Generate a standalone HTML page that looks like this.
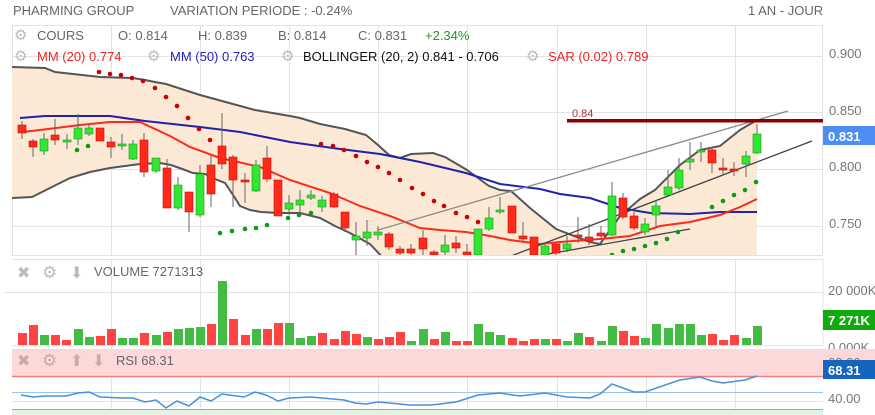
<!DOCTYPE html>
<html><head><meta charset="utf-8"><style>
body{margin:0;width:875px;height:415px;overflow:hidden;background:#fff;font-family:"Liberation Sans",sans-serif}
svg{position:absolute;left:0;top:0}
</style></head><body>
<svg width="875" height="415" viewBox="0 0 875 415" font-family="Liberation Sans, sans-serif">
<defs><clipPath id="mc"><rect x="12" y="25" width="811" height="230"/></clipPath>
<clipPath id="rc"><rect x="12" y="347" width="811" height="68"/></clipPath></defs>
<!-- header -->
<text x="13" y="15" font-size="13" fill="#666">PHARMING GROUP</text>
<text x="170" y="15" font-size="13" fill="#666">VARIATION PERIODE : -0.24%</text>
<text x="748" y="15" font-size="13" fill="#666">1 AN - JOUR</text>
<!-- grid -->
<g stroke="#e3e3e3" stroke-width="1" fill="none">
<rect x="12.5" y="25.5" width="810" height="230"/>
<path d="M111.5 25V255M200.5 25V255M289.5 25V255M378.5 25V255M467.5 25V255M557.5 25V255M646.5 25V255M735.5 25V255"/>
<path d="M12 56.5H823M12 112.5H823M12 169.5H823M12 226.5H823"/>
<path d="M111.5 259V345M200.5 259V345M289.5 259V345M378.5 259V345M467.5 259V345M557.5 259V345M646.5 259V345M735.5 259V345"/>
<path d="M12 259.5H823M5 292.5H823M12 345.5H823M823 259V345"/>
<path d="M111.5 347V415M200.5 347V415M289.5 347V415M378.5 347V415M467.5 347V415M557.5 347V415M646.5 347V415M735.5 347V415"/>
</g>
<g clip-path="url(#mc)">
<!-- bollinger fill -->
<path fill="#fbe9d6" d="M12 67L45 68L55 72L100 77L133 78L145 80L155 82L166 84L200 95L233 104L255 110L290 116L300 118L320 124L345 129L366 135L378 145L389 155L400 158L411 154L433 153L445 157L467 170L489 186L500 190L511 191L530 208L556 229L590 242L600 244L620 216L640 199L655 190L680 165L700 150L720 146L740 130L757 120L757 260L385 260L370 244L350 233L335 226L320 218L300 213L280 213L261 212L250 210L240 206L235 198L225 183L215 179L205 174L193 173L185 170L171 165L160 163L140 164L125 166L110 168L90 172L70 178L50 188L32 197L12 198Z"/>
<g stroke="#555" stroke-width="2" fill="none">
<path d="M12 67L45 68L55 72L100 77L133 78L145 80L155 82L166 84L200 95L233 104L255 110L290 116L300 118L320 124L345 129L366 135L378 145L389 155L400 158L411 154L433 153L445 157L467 170L489 186L500 190L511 191L530 208L556 229L590 242L600 244L620 216L640 199L655 190L680 165L700 150L720 146L740 130L757 120"/>
<path d="M12 198L32 197L50 188L70 178L90 172L110 168L125 166L140 164L160 163L171 165L185 170L193 173L205 174L215 179L225 183L235 198L240 206L250 210L261 212L280 213L300 213L320 218L335 226L350 233L370 244L385 260"/>
</g>
<path d="M20 118L45 116L110 116L145 121L200 127L240 132L290 142L340 149L380 154L420 162L466 173L500 184L540 189L560 194L590 198L620 208L650 213L690 214L720 212L757 212" stroke="#2222aa" stroke-width="2" fill="none"/>
<path d="M22 132L40 130L80 125L110 122L140 122L170 136L190 147L220 158L260 167L290 180L330 193L360 206L390 216L420 228L440 230L466 232L490 236L510 240L540 244L560 242L600 239L630 236L660 226L690 222L720 215L740 207L757 199" stroke="#ff2a1a" stroke-width="2" fill="none"/>
<!-- trendlines -->
<path d="M378 230L788 111" stroke="#888" stroke-width="1.3"/>
<path d="M511 256L812 141" stroke="#444" stroke-width="1.3"/>
<path d="M548 254L690 229" stroke="#444" stroke-width="1.3"/>
<!-- wicks -->
<g stroke="#666" stroke-width="1">
<path d="M22 121V139M33 139V157M44 133V155M55 119V145M67 134V149M78 114V145M89 124V136M100 128V141M111 137V158M122 134V150M133 140V160M144 133V177M156 158V173M167 159V208M178 177V210M189 192V232M200 165V217M211 155V207M222 113V169M233 155V207M245 173V203M256 160V192M267 146V182M278 180V216M289 195V215M300 190V212M311 190V200M322 196V212M334 192V208M345 212V232M356 222V255M367 220V246M378 226V240M389 232V250M400 246V255M411 244V255M423 230V255M434 250V255M445 235V255M456 236V253M467 244V255M478 229V255M489 207V231M500 197V214M512 206V233M523 222V242M534 237V255M545 242V255M556 244V255M567 236V252M578 217V243M589 224V245M601 226V240M612 182V236M623 193V219M634 212V230M645 218V235M656 200V228M668 170V197M679 158V190M690 142V170M701 142V162M712 147V173M723 158V175M734 162V176M746 151V177M757 124V154"/>
</g>
<!-- bodies -->
<g fill="#ff2a1a" stroke="#c01010" stroke-width="0.6">
<rect x="18" y="125" width="8" height="8"/><rect x="29" y="141" width="8" height="6"/><rect x="51" y="135" width="8" height="5"/><rect x="96" y="128" width="8" height="13"/><rect x="107" y="142" width="8" height="5"/><rect x="140" y="140" width="8" height="32"/><rect x="163" y="168" width="8" height="40"/><rect x="185" y="192" width="8" height="20"/><rect x="207" y="165" width="8" height="29"/><rect x="218" y="146" width="8" height="18"/><rect x="229" y="157" width="8" height="23"/><rect x="241" y="180" width="8" height="2"/><rect x="263" y="158" width="8" height="21"/><rect x="274" y="180" width="8" height="36"/><rect x="330" y="194" width="8" height="13"/><rect x="341" y="212" width="8" height="16"/><rect x="385" y="234" width="8" height="13"/><rect x="396" y="249" width="8" height="4"/><rect x="407" y="249" width="8" height="4"/><rect x="419" y="238" width="8" height="11"/><rect x="430" y="252" width="8" height="3"/><rect x="452" y="243" width="8" height="5"/><rect x="463" y="252" width="8" height="3"/><rect x="508" y="206" width="8" height="27"/><rect x="519" y="236" width="8" height="3"/><rect x="530" y="237" width="8" height="18"/><rect x="552" y="244" width="8" height="9"/><rect x="574" y="235" width="8" height="2"/><rect x="585" y="237" width="8" height="4"/><rect x="597" y="233" width="8" height="3"/><rect x="619" y="198" width="8" height="19"/><rect x="630" y="216" width="8" height="12"/><rect x="708" y="150" width="8" height="13"/><rect x="719" y="168" width="8" height="2"/><rect x="730" y="169" width="8" height="2"/>
</g>
<g fill="#33e633" stroke="#1a9a1a" stroke-width="0.6">
<rect x="40" y="139" width="8" height="12"/><rect x="63" y="140" width="8" height="2"/><rect x="74" y="128" width="8" height="11"/><rect x="85" y="128" width="8" height="6"/><rect x="118" y="144" width="8" height="2"/><rect x="129" y="144" width="8" height="15"/><rect x="152" y="158" width="8" height="13"/><rect x="174" y="185" width="8" height="23"/><rect x="196" y="174" width="8" height="41"/><rect x="252" y="165" width="8" height="26"/><rect x="285" y="203" width="8" height="6"/><rect x="296" y="200" width="8" height="5"/><rect x="307" y="195" width="8" height="3"/><rect x="318" y="200" width="8" height="7"/><rect x="352" y="236" width="8" height="4"/><rect x="363" y="232" width="8" height="6"/><rect x="374" y="232" width="8" height="3"/><rect x="441" y="245" width="8" height="7"/><rect x="474" y="229" width="8" height="26"/><rect x="485" y="218" width="8" height="11"/><rect x="496" y="210" width="8" height="2"/><rect x="541" y="246" width="8" height="9"/><rect x="563" y="244" width="8" height="5"/><rect x="608" y="196" width="8" height="39"/><rect x="641" y="224" width="8" height="8"/><rect x="652" y="206" width="8" height="9"/><rect x="664" y="187" width="8" height="8"/><rect x="675" y="170" width="8" height="18"/><rect x="686" y="159" width="8" height="3"/><rect x="697" y="150" width="8" height="2"/><rect x="742" y="156" width="8" height="8"/><rect x="753" y="134" width="8" height="19"/>
</g>
<!-- SAR dots -->
<g fill="#cc0000">
<circle cx="99" cy="72" r="2.3"/><circle cx="110" cy="74" r="2.3"/><circle cx="121" cy="75" r="2.3"/><circle cx="132" cy="78" r="2.3"/><circle cx="143" cy="81" r="2.3"/><circle cx="155" cy="88" r="2.3"/><circle cx="166" cy="97" r="2.3"/><circle cx="177" cy="106" r="2.3"/><circle cx="188" cy="118" r="2.3"/><circle cx="199" cy="129" r="2.3"/><circle cx="210" cy="140" r="2.3"/>
<circle cx="321" cy="144" r="2.3"/><circle cx="333" cy="146" r="2.3"/><circle cx="344" cy="150" r="2.3"/><circle cx="356" cy="156" r="2.3"/><circle cx="367" cy="162" r="2.3"/><circle cx="378" cy="167" r="2.3"/><circle cx="389" cy="173" r="2.3"/><circle cx="400" cy="180" r="2.3"/><circle cx="412" cy="188" r="2.3"/><circle cx="423" cy="194" r="2.3"/><circle cx="434" cy="201" r="2.3"/><circle cx="444" cy="206" r="2.3"/><circle cx="456" cy="213" r="2.3"/><circle cx="467" cy="217" r="2.3"/><circle cx="478" cy="222" r="2.3"/>
</g>
<g fill="#119911">
<circle cx="77" cy="150" r="2.3"/><circle cx="88" cy="146" r="2.3"/>
<circle cx="220" cy="233" r="2.3"/><circle cx="232" cy="231" r="2.3"/><circle cx="245" cy="229" r="2.3"/><circle cx="256" cy="228" r="2.3"/><circle cx="267" cy="225" r="2.3"/><circle cx="288" cy="218" r="2.3"/><circle cx="299" cy="215" r="2.3"/><circle cx="311" cy="213" r="2.3"/>
<circle cx="612" cy="255" r="2.3"/><circle cx="623" cy="251" r="2.3"/><circle cx="634" cy="249" r="2.3"/><circle cx="645" cy="246" r="2.3"/><circle cx="656" cy="243" r="2.3"/><circle cx="667" cy="239" r="2.3"/><circle cx="678" cy="232" r="2.3"/><circle cx="712" cy="207" r="2.3"/><circle cx="723" cy="201" r="2.3"/><circle cx="734" cy="195" r="2.3"/><circle cx="745" cy="190" r="2.3"/><circle cx="756" cy="182" r="2.3"/>
</g>
<!-- resistance -->
<rect x="567" y="119" width="256" height="3.5" fill="#8b0000"/>
<text x="572" y="117" font-size="11" fill="#a33">0.84</text>
</g>
<!-- legend rows -->
<g font-size="13">
<text x="14" y="40" font-size="15" fill="#bbb">⚙</text>
<text x="37" y="40" fill="#666">COURS</text>
<text x="118" y="40" fill="#666">O: 0.814</text>
<text x="198" y="40" fill="#666">H: 0.839</text>
<text x="278" y="40" fill="#666">B: 0.814</text>
<text x="358" y="40" fill="#666">C: 0.831</text>
<text x="425" y="40" fill="#229922">+2.34%</text>
<text x="14" y="61" font-size="15" fill="#bbb">⚙</text>
<text x="37" y="61" fill="#ee2222">MM (20) 0.774</text>
<text x="147" y="61" font-size="15" fill="#bbb">⚙</text>
<text x="170" y="61" fill="#2222bb">MM (50) 0.763</text>
<text x="281" y="61" font-size="15" fill="#bbb">⚙</text>
<text x="303" y="61" fill="#111">BOLLINGER (20, 2) 0.841 - 0.706</text>
<text x="526" y="61" font-size="15" fill="#bbb">⚙</text>
<text x="548" y="61" fill="#ee2222">SAR (0.02) 0.789</text>
</g>
<!-- price axis -->
<g font-size="13" fill="#777">
<text x="829" y="58">0.900</text><text x="829" y="115">0.850</text><text x="829" y="171">0.800</text><text x="829" y="228">0.750</text>
</g>
<rect x="823" y="126" width="52" height="19" fill="#4d8ef5"/>
<text x="828" y="141" font-size="13" font-weight="bold" fill="#fff">0.831</text>
<!-- volume -->
<g fill="#ff4444">
<rect x="18" y="333" width="9" height="12"/><rect x="29" y="325" width="9" height="20"/><rect x="51" y="335" width="9" height="10"/><rect x="62" y="340" width="9" height="5"/><rect x="96" y="336" width="9" height="9"/><rect x="107" y="329" width="9" height="16"/><rect x="140" y="333" width="9" height="12"/><rect x="163" y="332" width="9" height="13"/><rect x="207" y="324" width="9" height="21"/><rect x="229" y="319" width="9" height="26"/><rect x="241" y="335" width="9" height="10"/><rect x="263" y="329" width="9" height="16"/><rect x="274" y="323" width="9" height="22"/><rect x="318" y="333" width="9" height="12"/><rect x="330" y="339" width="9" height="6"/><rect x="341" y="331" width="9" height="14"/><rect x="352" y="334" width="9" height="11"/><rect x="374" y="339" width="9" height="6"/><rect x="385" y="337" width="9" height="8"/><rect x="396" y="332" width="9" height="13"/><rect x="430" y="339" width="9" height="6"/><rect x="452" y="341" width="9" height="4"/><rect x="463" y="341" width="9" height="4"/><rect x="508" y="338" width="9" height="7"/><rect x="519" y="341" width="9" height="4"/><rect x="530" y="339" width="9" height="6"/><rect x="552" y="339" width="9" height="6"/><rect x="585" y="337" width="9" height="8"/><rect x="619" y="331" width="9" height="14"/><rect x="630" y="336" width="9" height="9"/><rect x="708" y="334" width="9" height="11"/><rect x="719" y="340" width="9" height="5"/><rect x="730" y="335" width="9" height="10"/>
</g>
<g fill="#44bb44">
<rect x="40" y="335" width="9" height="10"/><rect x="74" y="329" width="9" height="16"/><rect x="85" y="337" width="9" height="8"/><rect x="118" y="338" width="9" height="7"/><rect x="129" y="338" width="9" height="7"/><rect x="152" y="335" width="9" height="10"/><rect x="174" y="329" width="9" height="16"/><rect x="185" y="328" width="9" height="17"/><rect x="196" y="327" width="9" height="18"/><rect x="218" y="281" width="9" height="64"/><rect x="252" y="329" width="9" height="16"/><rect x="285" y="323" width="9" height="22"/><rect x="296" y="338" width="9" height="7"/><rect x="307" y="336" width="9" height="9"/><rect x="363" y="337" width="9" height="8"/><rect x="407" y="341" width="9" height="4"/><rect x="419" y="329" width="9" height="16"/><rect x="441" y="332" width="9" height="13"/><rect x="474" y="324" width="9" height="21"/><rect x="485" y="332" width="9" height="13"/><rect x="496" y="335" width="9" height="10"/><rect x="541" y="339" width="9" height="6"/><rect x="563" y="341" width="9" height="4"/><rect x="574" y="333" width="9" height="12"/><rect x="597" y="341" width="9" height="4"/><rect x="608" y="326" width="9" height="19"/><rect x="641" y="338" width="9" height="7"/><rect x="652" y="324" width="9" height="21"/><rect x="664" y="328" width="9" height="17"/><rect x="675" y="324" width="9" height="21"/><rect x="686" y="324" width="9" height="21"/><rect x="697" y="335" width="9" height="10"/><rect x="742" y="338" width="9" height="7"/><rect x="753" y="326" width="9" height="19"/>
</g>
<g font-size="14" fill="#bbb">
<text x="17" y="278" font-size="16">✖</text>
<text x="42" y="278" font-size="17">⚙</text>
<text x="70" y="278" font-size="16">⬇</text>
</g>
<text x="94" y="276" font-size="13" fill="#666">VOLUME 7271313</text>
<g font-size="13" fill="#777">
<text x="828" y="295">20 000K</text>
<text x="828" y="352">0.000K</text>
</g>
<rect x="823" y="310" width="52" height="20" fill="#11aa11"/>
<text x="828" y="325" font-size="13" font-weight="bold" fill="#fff">7 271K</text>
<!-- RSI -->
<rect x="12" y="349" width="811" height="27" fill="#fdd8d8"/>
<rect x="823" y="349" width="52" height="27" fill="#fdd8d8"/>
<path d="M12 376.5H875" stroke="#f08080" stroke-width="1.5"/>
<path d="M12 392.5H823" stroke="#9cc4f0" stroke-width="1"/>
<path d="M12 401.5H823" stroke="#e3e3e3" stroke-width="1"/>
<rect x="12" y="409" width="811" height="6" fill="#e3f3e3"/>
<path d="M12 409.5H823" stroke="#7cc07c" stroke-width="1"/>
<g font-size="14" fill="#c9a9a9">
<text x="17" y="366" font-size="16">✖</text>
<text x="42" y="366" font-size="17">⚙</text>
<text x="70" y="366" font-size="16">⬆</text>
<text x="92" y="366" font-size="16">⬇</text>
</g>
<text x="116" y="365" font-size="13" fill="#666">RSI 68.31</text>
<path clip-path="url(#rc)" d="M21 395L33 397L45 396L66 396L78 393L89 392L100 397L122 398L133 398L145 402L156 400L166 408L177 401L189 406L200 397L211 401L222 394L244 397L255 392L266 395L278 401L289 398L311 397L333 399L344 400L355 403L366 404L378 402L400 404L410 405L430 405L440 404L456 402L478 395L500 393L520 396L545 393L567 397L590 398L600 394L612 384L634 392L645 392L668 384L680 380L700 377L712 381L723 383L745 380L757 376" stroke="#4a90d9" stroke-width="1.5" fill="none"/>
<text x="828" y="367" font-size="13" fill="#777">60.00</text>
<rect x="823" y="360" width="52" height="19" fill="#1565c0"/>
<text x="828" y="375" font-size="13" font-weight="bold" fill="#fff">68.31</text>
<text x="828" y="403" font-size="13" fill="#777">40.00</text>
</svg>
</body></html>
